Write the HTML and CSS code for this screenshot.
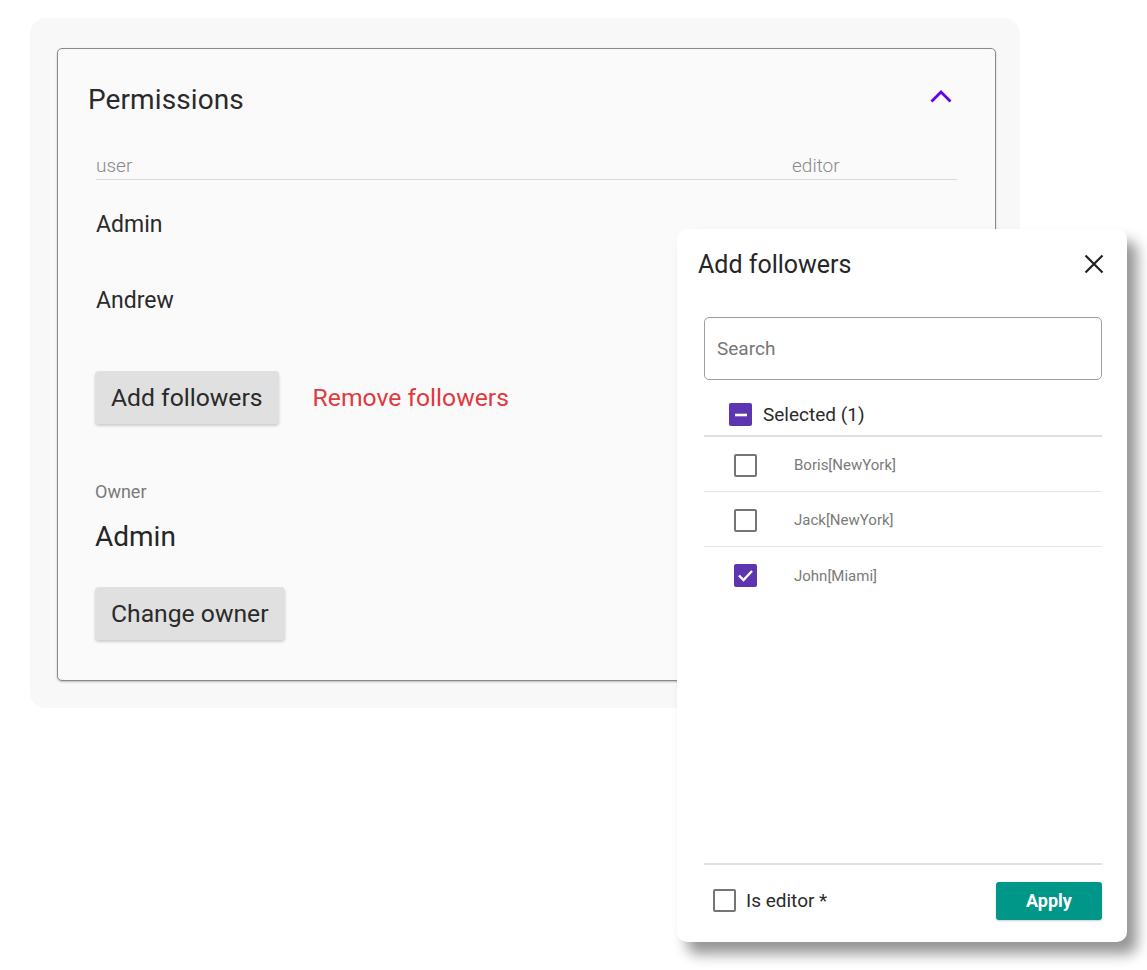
FILE: index.html
```html
<!DOCTYPE html>
<html>
<head>
<meta charset="utf-8">
<link rel="stylesheet" href="styles.css">
</head>
<body>
<div class="page">
  <div class="panel">
    <div class="card">
      <div class="card-head">
        <span class="card-title">Permissions</span>
        <svg class="chevron" width="24" height="24" viewBox="0 0 24 24"><path d="M2.5 16.5 L12 7 L21.5 16.5" fill="none" stroke="#6200ea" stroke-width="2.8"/></svg>
      </div>
      <div class="table">
        <div class="thead">
          <span class="th-user">user</span>
          <span class="th-editor">editor</span>
        </div>
        <div class="trow">Admin</div>
        <div class="trow">Andrew</div>
      </div>
      <div class="actions">
        <button class="btn">Add followers</button>
        <button class="link-btn">Remove followers</button>
      </div>
      <div class="owner">
        <div class="owner-label">Owner</div>
        <div class="owner-name">Admin</div>
        <button class="btn">Change owner</button>
      </div>
    </div>
  </div>

  <div class="dialog">
    <div class="dlg-head">
      <span class="dlg-title">Add followers</span>
      <svg class="close" width="20" height="20" viewBox="0 0 20 20"><path d="M1.5 1.5 L18.5 18.5 M18.5 1.5 L1.5 18.5" stroke="#222" stroke-width="2.2" fill="none"/></svg>
    </div>
    <div class="search">Search</div>
    <div class="selected-row">
      <span class="cb cb-on"><svg width="22" height="22" viewBox="0 0 22 22"><path d="M5 11 H17" stroke="#fff" stroke-width="2.6"/></svg></span>
      <span class="selected-text">Selected (1)</span>
    </div>
    <div class="list">
      <div class="item"><span class="cb cb-off"></span><span class="item-text">Boris[NewYork]</span></div>
      <div class="item"><span class="cb cb-off"></span><span class="item-text">Jack[NewYork]</span></div>
      <div class="item last"><span class="cb cb-on"><svg width="23" height="23" viewBox="0 0 23 23"><path d="M5 11.5 L9.5 16 L18 7" stroke="#fff" stroke-width="2.4" fill="none"/></svg></span><span class="item-text">John[Miami]</span></div>
    </div>
    <div class="dlg-foot">
      <label class="editor-check"><span class="cb cb-off"></span><span class="editor-text">Is editor *</span></label>
      <button class="apply">Apply</button>
    </div>
  </div>
</div>
</body>
</html>
```

FILE: styles.css
```css
* { box-sizing: border-box; }
html, body { margin: 0; padding: 0; background: #ffffff; }
body {
  font-family: Roboto, "Noto Sans", "Liberation Sans", sans-serif;
  color: #262626;
  width: 1147px;
  height: 970px;
  overflow: hidden;
}
.page { position: relative; width: 1147px; height: 970px; padding: 18px 0 0 30px; }

.panel {
  width: 990px;
  height: 690px;
  background: #f8f8f8;
  border-radius: 16px;
  padding: 30px 24px 27px 27px;
}
.card {
  width: 939px;
  height: 633px;
  background: #fafafa;
  border: 1.5px solid #8a8a8a;
  border-radius: 5px;
  box-shadow: 0 1px 2px rgba(0,0,0,0.25);
  padding: 0 38px 0 37px;
}
.card-head {
  height: 100px;
  display: flex;
  align-items: center;
  justify-content: space-between;
  margin-left: -7px;
  padding-right: 4px;
}
.card-title { font-size: 28px; font-weight: 400; color: #2a2a2a; letter-spacing: 0.1px; }
.chevron { display: block; margin-top: -4px; }

.table { margin-left: 1px; margin-right: 0; }
.thead {
  height: 31px;
  display: flex;
  justify-content: space-between;
  align-items: flex-end;
  border-bottom: 1.5px solid #d8d8d8;
  padding-bottom: 2px;
  font-size: 19px;
  color: #8a8a8a;
  font-weight: 300;
}
.th-editor { width: 165px; }
.thead + .trow { margin-top: 6px; }
.trow {
  height: 76px;
  display: flex;
  align-items: center;
  font-size: 23px;
  color: #2a2a2a;
}

.actions {
  display: flex;
  align-items: center;
  gap: 34px;
  margin-top: 33px;
}
.btn {
  height: 53px;
  padding: 0 16px;
  border: none;
  border-radius: 4px;
  background: #e0e0e0;
  box-shadow: 0 2px 3px rgba(0,0,0,0.18);
  font-family: inherit;
  font-size: 24.7px;
  color: #2a2a2a;
  cursor: pointer;
}
.link-btn {
  border: none;
  background: none;
  padding: 0;
  font-family: inherit;
  font-size: 24.7px;
  color: #e0393e;
}
.owner { margin-top: 56px; }
.owner-label { font-size: 18px; color: #7a7a7a; height: 24px; line-height: 24px; }
.owner-name { font-size: 28px; color: #262626; height: 40px; line-height: 40px; margin-top: 13px; }
.owner .btn { margin-top: 30px; }

.dialog {
  position: absolute;
  left: 677px;
  top: 229px;
  width: 450px;
  height: 713px;
  background: #ffffff;
  border-radius: 10px;
  box-shadow: 10px 12px 14px rgba(0,0,0,0.42);
  display: flex;
  flex-direction: column;
  padding: 0 25px 0 27px;
}
.dlg-head {
  height: 70px;
  display: flex;
  align-items: center;
  justify-content: space-between;
  margin-left: -6px;
  margin-right: -2px;
}
.dlg-title { font-size: 25px; color: #262626; }
.close { display: block; }
.search {
  margin-top: 18px;
  height: 63px;
  border: 1.5px solid #9e9e9e;
  border-radius: 5px;
  display: flex;
  align-items: center;
  padding-left: 12px;
  font-size: 19px;
  color: #777;
}
.selected-row {
  height: 57px;
  display: flex;
  align-items: center;
  padding-left: 25px;
  padding-top: 14px;
  border-bottom: 2px solid #e0e0e0;
}
.selected-text { font-size: 19px; color: #2a2a2a; margin-left: 11px; }
.cb {
  display: inline-flex;
  align-items: center;
  justify-content: center;
  width: 23px;
  height: 23px;
  border-radius: 2px;
  flex: none;
}
.cb-on { background: #5e35b1; }
.cb-off { border: 2.5px solid #757575; }
.list { flex: 1; }
.item {
  height: 55px;
  display: flex;
  align-items: center;
  padding-left: 30px;
  padding-top: 2px;
  border-bottom: 1.5px solid #e6e6e6;
}
.item.last { border-bottom: none; }
.item-text { font-size: 15px; color: #7a7a7a; margin-left: 37px; }
.dlg-foot {
  height: 79px;
  border-top: 2px solid #e0e0e0;
  display: flex;
  align-items: center;
  justify-content: space-between;
  padding-bottom: 6px;
}
.editor-check { display: flex; align-items: center; margin-left: 9px; }
.editor-text { font-size: 19px; color: #2a2a2a; margin-left: 10px; }
.apply {
  width: 106px;
  height: 38px;
  border: none;
  border-radius: 3px;
  background: #009688;
  color: #ffffff;
  font-family: inherit;
  font-weight: 700;
  font-size: 18px;
  box-shadow: 0 1px 2px rgba(0,0,0,0.2);
}
```
